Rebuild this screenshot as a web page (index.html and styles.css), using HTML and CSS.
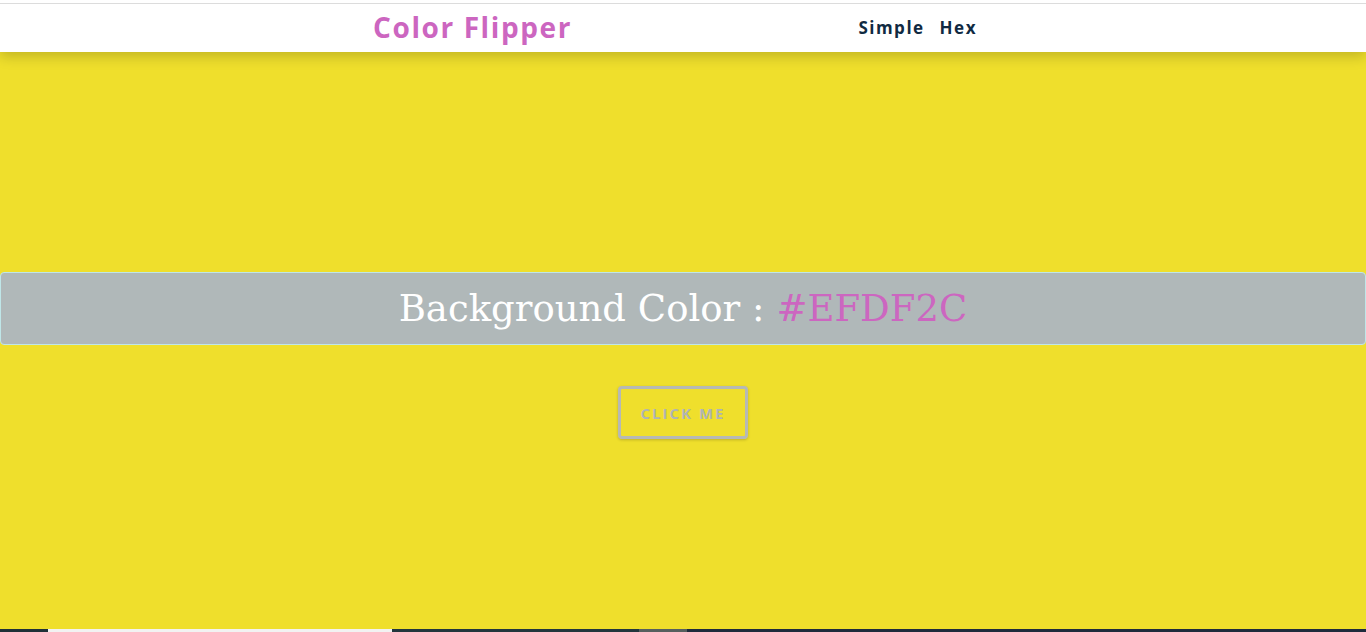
FILE: index.html
```html
<!DOCTYPE html>
<html lang="en">
<head>
<meta charset="utf-8">
<title>Color Flipper</title>
<link rel="stylesheet" href="styles.css">
</head>
<body>
  <nav class="nav">
    <div class="nav-center">
      <h4 class="logo">Color Flipper</h4>
      <ul class="nav-links">
        <li><a href="#">Simple</a></li>
        <li><a href="#">Hex</a></li>
      </ul>
    </div>
  </nav>
  <main class="main">
    <div class="container">
      <h2 class="banner">Background Color : <span class="color">#EFDF2C</span></h2>
      <button class="btn" type="button">click me</button>
    </div>
  </main>
  <div class="taskbar">
    <span class="seg seg-dark-a"></span>
    <span class="seg seg-light"></span>
    <span class="seg seg-dark-b"></span>
    <span class="seg seg-gray"></span>
    <span class="seg seg-dark-c"></span>
  </div>
</body>
</html>
```
FILE: styles.css
```css
* {
  margin: 0;
  padding: 0;
  box-sizing: border-box;
}

html, body {
  height: 100%;
}

body {
  background: #efdf2c;
  font-family: "Open Sans", "Liberation Sans", sans-serif;
  display: flex;
  flex-direction: column;
  height: 632px;
  overflow: hidden;
}

.nav {
  background: linear-gradient(#fff 3px, #dcdcdc 3px, #dcdcdc 4px, #fff 4px);
  height: 52px;
  padding-top: 4px;
  box-shadow: 0 5px 12px rgba(0, 0, 0, 0.18);
  position: relative;
  z-index: 2;
  flex: none;
}

.nav-center {
  width: 620px;
  margin: 0 auto;
  height: 100%;
  display: flex;
  align-items: center;
  justify-content: space-between;
  padding-bottom: 2px;
}

.logo {
  color: #cc66c0;
  font-family: "Open Sans", sans-serif;
  font-weight: 700;
  font-size: 28px;
  letter-spacing: 1.6px;
}

.nav-links {
  list-style: none;
  display: flex;
  gap: 15px;
  margin-right: 16px;
}

.nav-links a {
  text-decoration: none;
  color: #102a42;
  font-family: "Open Sans", sans-serif;
  font-weight: 700;
  font-size: 17px;
  letter-spacing: 1.5px;
}

.main {
  flex: 1;
  display: flex;
  flex-direction: column;
  padding-top: 220px;
}

.container {
  display: flex;
  flex-direction: column;
  align-items: center;
}

.banner {
  width: 100%;
  height: 73px;
  background: #b0b8b9;
  border: 1px solid #bfe6e8;
  border-radius: 4px;
  display: flex;
  align-items: center;
  justify-content: center;
  color: #fff;
  font-family: "DejaVu Serif", "Liberation Serif", serif;
  font-weight: 400;
  font-size: 37px;
  letter-spacing: 0;
}

.color {
  color: #cc66c0;
  margin-left: 12px;
}

.btn {
  margin-top: 41px;
  width: 130px;
  height: 53px;
  background: transparent;
  border: 3px solid #b6b9b5;
  border-radius: 4px;
  color: #b0b5b3;
  text-transform: uppercase;
  font-family: "Open Sans", sans-serif;
  font-weight: 700;
  font-size: 15px;
  letter-spacing: 2px;
  box-shadow: 0 1px 3px rgba(0, 0, 0, 0.2);
  cursor: pointer;
}

.taskbar {
  height: 3px;
  display: flex;
  flex: none;
}

.seg { height: 100%; }
.seg-dark-a { width: 48px; background: #1f3138; }
.seg-light { width: 344px; background: #f2f2f2; }
.seg-dark-b { width: 247px; background: #22363d; }
.seg-gray { width: 48px; background: #56605f; }
.seg-dark-c { flex: 1; background: #1e2b3c; }
```
